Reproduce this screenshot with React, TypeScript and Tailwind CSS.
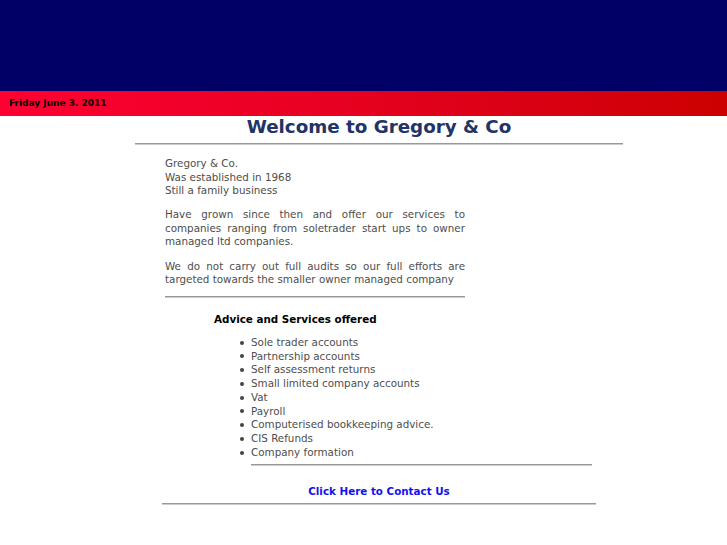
const services = [
  "Sole trader accounts",
  "Partnership accounts",
  "Self assessment returns",
  "Small limited company accounts",
  "Vat",
  "Payroll",
  "Computerised bookkeeping advice.",
  "CIS Refunds",
  "Company formation",
];

function Rule({ className }: { className: string }) {
  return (
    <div
      className={`h-[2px] border-t border-t-[#999999] border-b border-b-[#cccccc] ${className}`}
    />
  );
}

export default function App() {
  return (
    <div className="min-h-screen bg-white font-['DejaVu_Sans',Verdana,sans-serif]">
      <header className="h-[91px] bg-[#000066]" />
      <div className="flex h-[25px] items-center bg-gradient-to-r from-[#ff0033] to-[#cc0000] pl-[9px]">
        <span className="text-[9px] font-bold text-black">Friday June 3. 2011</span>
      </div>

      <div className="ml-[135px] w-[488px]">
        <h1 className="text-center text-[18.3px] font-bold leading-[22px] text-[#223366]">
          Welcome to Gregory &amp; Co
        </h1>
        <Rule className="mt-[5px] w-full" />

        <div className="ml-[30px] mt-[12px] w-[300px] text-[10.35px] leading-[13.6px] text-[#4d4d4d]">
          <p>
            Gregory &amp; Co.
            <br />
            Was established in 1968
            <br />
            Still a family business
          </p>
          <p className="mt-[10.5px] text-justify">
            Have grown since then and offer our services to companies ranging from soletrader start ups to owner managed ltd companies.
          </p>
          <p className="mt-[10.5px] text-justify">
            We do not carry out full audits so our full efforts are targeted towards the smaller owner managed company
          </p>
          <Rule className="mt-[9px] w-full" />
        </div>

        <div className="ml-[79px] mt-[14px] text-[10.35px] font-bold leading-[14px] text-black">
          Advice and Services offered
        </div>

        <ul className="ml-[105px] mt-[10px] text-[10.35px] leading-[13.75px] text-[#4d4d4d]">
          {services.map((s) => (
            <li key={s} className="flex items-center">
              <span className="mr-[7px] h-[4px] w-[4px] rounded-full bg-[#444444]" />
              {s}
            </li>
          ))}
        </ul>
        <Rule className="ml-[116px] mt-[4px] w-[341px]" />

        <div className="mt-[18px] text-center text-[10.35px] font-bold leading-[14px]">
          <a href="#" className="text-[#1111ee]">
            Click Here to Contact Us
          </a>
        </div>
        <Rule className="ml-[27px] mt-[5px] w-[434px]" />
      </div>
    </div>
  );
}
